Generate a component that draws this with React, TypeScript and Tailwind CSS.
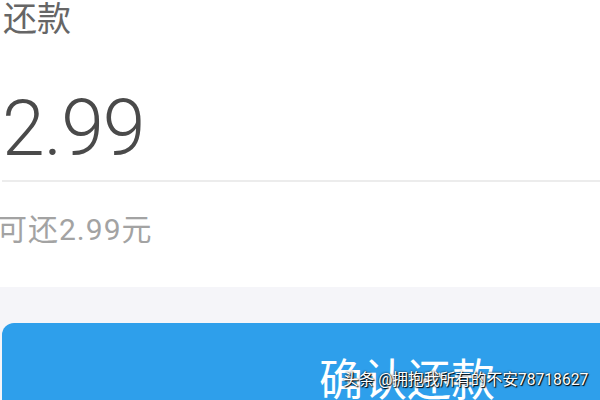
export default function App() {
  return (
    <div className="relative w-[600px] h-[400px] overflow-hidden bg-white font-['Roboto','Noto_Sans_CJK_SC',sans-serif]">
      {/* Title */}
      <div className="h-[35px] pt-[2px] pl-[3px] text-[34px] leading-[34px] text-[#666]">还款</div>

      {/* Amount */}
      <div className="mt-[55px] h-[78px] pl-[2px] text-[77px] leading-[78px] font-light tracking-[-1px] text-[#4a4a4a]">
        2.99
      </div>

      {/* Divider */}
      <div className="mt-[12px] ml-[2px] h-[2px] bg-[#ececec]" />

      {/* Hint */}
      <div className="mt-[33px] h-[30px] -ml-[3px] text-[30px] leading-[30px] tracking-[1px] text-[#a3a3a3]">可还2.99元</div>

      {/* Bottom area */}
      <div className="mt-[42px] h-[200px] bg-[#f5f5f9] pt-[36px] pl-[2px]">
        <button className="w-[810px] h-[120px] rounded-[12px] bg-[#2e9feb] text-white text-[44px] leading-none flex justify-center pt-[36px]">
          确认还款
        </button>
      </div>

      {/* Watermark */}
      <div className="absolute left-[343px] top-[369px] text-[15.7px] leading-[22px] text-white whitespace-nowrap [text-shadow:1px_1px_1px_#000,0_0_2px_#000]">
        头条 @拥抱我所有的不安78718627
      </div>
    </div>
  );
}
